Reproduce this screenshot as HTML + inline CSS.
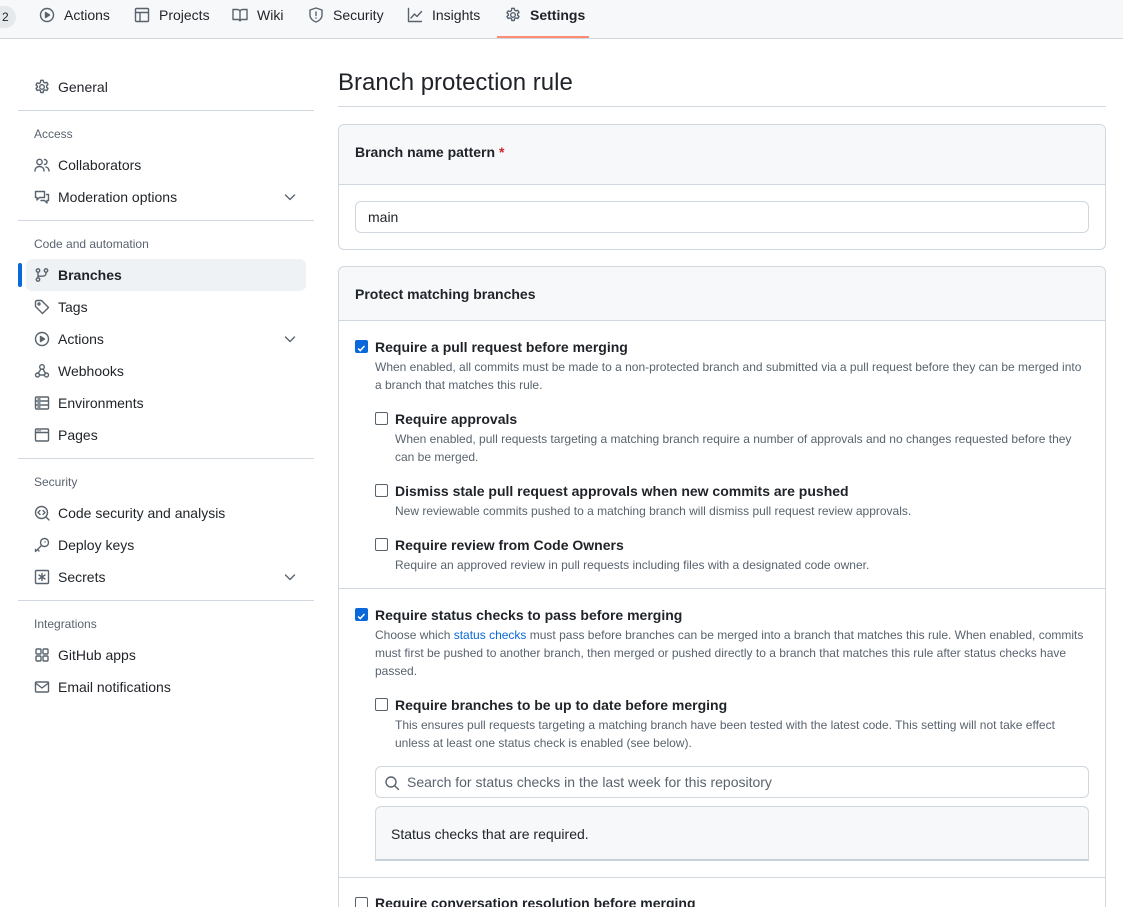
<!DOCTYPE html>
<html><head><meta charset="utf-8"><style>
*{margin:0;padding:0;box-sizing:border-box}
html,body{width:1123px;height:907px;overflow:hidden}
body{background:#fff;font-family:"Liberation Sans",sans-serif;color:#1f2328;position:relative;font-size:14px}
.a{position:absolute;white-space:nowrap;line-height:20px}
.nav{position:absolute;left:0;top:0;width:1123px;height:39px;background:#f6f8fa;border-bottom:1px solid #d0d7de}
.ic{position:absolute;width:16px;height:16px}
.ic svg{width:16px;height:16px;fill:none;stroke:#59636e;stroke-width:1.4;stroke-linecap:round;stroke-linejoin:round}
.hd{font-size:12px;color:#59636e;font-weight:normal}
.sep{position:absolute;left:18px;width:296px;height:1px;background:#d0d7de}
.d{font-size:12px;color:#59636e;line-height:18px;position:absolute;white-space:normal}
.cb{position:absolute;width:13px;height:13px;border:1px solid #59636e;border-radius:2px;background:#fff}
.cb.on{background:#0969da;border-color:#0969da}
.b{font-weight:600}
</style></head><body>
<div class="nav"></div>
<div class="a" style="left:0;top:6px;width:16px;height:22px;background:#e6e9ec;border-radius:0 11px 11px 0;font-size:12px;line-height:22px;padding-left:2px">2</div>
<span class="ic" style="left:39px;top:7px"><svg viewBox="0 0 16 16"><circle cx="8" cy="8" r="6.5"/><path d="M6.5 5.5v5l4-2.5z" fill="#59636e"/></svg></span>
<div class="a" style="left:64px;top:5px">Actions</div>
<span class="ic" style="left:134px;top:7px"><svg viewBox="0 0 16 16"><rect x="1.5" y="1.5" width="13" height="13" rx="1"/><path d="M1.5 5.5h13M6 5.5v9"/></svg></span>
<div class="a" style="left:159px;top:5px">Projects</div>
<span class="ic" style="left:232px;top:7px"><svg viewBox="0 0 16 16"><path d="M1 2.5h4.5c1.5 0 2.5 1 2.5 2.5v9c0-1-1-1.5-2-1.5H1zM15 2.5h-4.5C9 2.5 8 3.5 8 5v9c0-1 1-1.5 2-1.5h5z"/></svg></span>
<div class="a" style="left:257px;top:5px">Wiki</div>
<span class="ic" style="left:308px;top:7px"><svg viewBox="0 0 16 16"><path d="M8 1l6 2v5c0 3.5-3 6-6 7-3-1-6-3.5-6-7V3z"/><path d="M8 5v3.5M8 11v.2"/></svg></span>
<div class="a" style="left:333px;top:5px">Security</div>
<span class="ic" style="left:407px;top:7px"><svg viewBox="0 0 16 16"><path d="M1.5 1.5v13h13M4 11l3.5-4 2.5 2.5 4.5-5"/></svg></span>
<div class="a" style="left:432px;top:5px">Insights</div>
<span class="ic" style="left:505px;top:7px"><svg viewBox="0 0 16 16"><circle cx="8" cy="8" r="2.3"/><path d="M6.8 1.3h2.4l.4 1.8 1.4.8 1.8-.6 1.2 2-1.4 1.3v1.6l1.4 1.3-1.2 2-1.8-.6-1.4.8-.4 1.8H6.8l-.4-1.8-1.4-.8-1.8.6-1.2-2 1.4-1.3V7.2L2 5.9l1.2-2 1.8.6 1.4-.8z"/></svg></span>
<div class="a b" style="left:530px;top:5px">Settings</div>
<div style="position:absolute;left:497px;top:36px;width:92px;height:2px;background:#fd8c73"></div>

<span class="ic" style="left:34px;top:79px"><svg viewBox="0 0 16 16"><circle cx="8" cy="8" r="2.3"/><path d="M6.8 1.3h2.4l.4 1.8 1.4.8 1.8-.6 1.2 2-1.4 1.3v1.6l1.4 1.3-1.2 2-1.8-.6-1.4.8-.4 1.8H6.8l-.4-1.8-1.4-.8-1.8.6-1.2-2 1.4-1.3V7.2L2 5.9l1.2-2 1.8.6 1.4-.8z"/></svg></span>
<div class="a" style="left:58px;top:77px">General</div>
<div class="sep" style="top:110px"></div>
<div class="a hd" style="left:34px;top:124px">Access</div>
<span class="ic" style="left:34px;top:157px"><svg viewBox="0 0 16 16"><circle cx="5.5" cy="5" r="2.7"/><path d="M1 14c0-3 2-4.5 4.5-4.5S10 11 10 14M10.5 2.5a2.5 2.5 0 0 1 0 5M12 10c1.8.5 3 2 3 4"/></svg></span>
<div class="a" style="left:58px;top:155px">Collaborators</div>
<span class="ic" style="left:34px;top:189px"><svg viewBox="0 0 16 16"><path d="M1.5 2.5h9v6h-5l-2.5 2.5v-2.5h-1.5zM12.5 5.5h2v6h-1.5v2.5l-2.5-2.5h-3.5"/></svg></span>
<div class="a" style="left:58px;top:187px">Moderation options</div>
<span class="ic" style="left:282px;top:189px"><svg viewBox="0 0 16 16"><path d="M3.5 6l4.5 4.5L12.5 6"/></svg></span>
<div class="sep" style="top:220px"></div>
<div class="a hd" style="left:34px;top:234px">Code and automation</div>
<div style="position:absolute;left:26px;top:259px;width:280px;height:32px;background:#eff2f5;border-radius:6px"></div>
<div style="position:absolute;left:18px;top:263px;width:4px;height:24px;background:#0969da;border-radius:4px"></div>
<span class="ic" style="left:34px;top:267px"><svg viewBox="0 0 16 16"><circle cx="4" cy="3.5" r="1.7"/><circle cx="4" cy="12.5" r="1.7"/><circle cx="12" cy="3.5" r="1.7"/><path d="M4 5.2v5.6M12 5.2v1c0 2-1.5 3-3.5 3H4"/></svg></span>
<div class="a b" style="left:58px;top:265px">Branches</div>
<span class="ic" style="left:34px;top:299px"><svg viewBox="0 0 16 16"><path d="M1.5 2.5v5l7 7 6-6-7-7h-5z"/><circle cx="5" cy="5" r="1"/></svg></span>
<div class="a" style="left:58px;top:297px">Tags</div>
<span class="ic" style="left:34px;top:331px"><svg viewBox="0 0 16 16"><circle cx="8" cy="8" r="6.5"/><path d="M6.5 5.5v5l4-2.5z" fill="#59636e"/></svg></span>
<div class="a" style="left:58px;top:329px">Actions</div>
<span class="ic" style="left:282px;top:331px"><svg viewBox="0 0 16 16"><path d="M3.5 6l4.5 4.5L12.5 6"/></svg></span>
<span class="ic" style="left:34px;top:363px"><svg viewBox="0 0 16 16"><circle cx="8" cy="4" r="2.3"/><circle cx="3.5" cy="12" r="2"/><circle cx="12.5" cy="12" r="2"/><path d="M7 6l-3 4.5M9 6l2.5 4.5M5.5 12h5"/></svg></span>
<div class="a" style="left:58px;top:361px">Webhooks</div>
<span class="ic" style="left:34px;top:395px"><svg viewBox="0 0 16 16"><rect x="1.5" y="2" width="13" height="12" rx="1"/><path d="M1.5 6h13M1.5 10h13M4 4h2M4 8h2M4 12h2"/></svg></span>
<div class="a" style="left:58px;top:393px">Environments</div>
<span class="ic" style="left:34px;top:427px"><svg viewBox="0 0 16 16"><rect x="1.5" y="2" width="13" height="12" rx="1"/><path d="M1.5 5.5h13M4 3.8h.1M6 3.8h.1"/></svg></span>
<div class="a" style="left:58px;top:425px">Pages</div>
<div class="sep" style="top:458px"></div>
<div class="a hd" style="left:34px;top:472px">Security</div>
<span class="ic" style="left:34px;top:505px"><svg viewBox="0 0 16 16"><circle cx="7.5" cy="7.5" r="6"/><path d="M12 12l3 3M6 5.5l-2 2 2 2M9 5.5l2 2-2 2"/></svg></span>
<div class="a" style="left:58px;top:503px">Code security and analysis</div>
<span class="ic" style="left:34px;top:537px"><svg viewBox="0 0 16 16"><circle cx="10.5" cy="5.5" r="4"/><path d="M7.5 8.5L1.5 14.5v-2M3.5 12.5l1.5 1.5M11 5h.1"/></svg></span>
<div class="a" style="left:58px;top:535px">Deploy keys</div>
<span class="ic" style="left:34px;top:569px"><svg viewBox="0 0 16 16"><rect x="1.5" y="1.5" width="13" height="13" rx="1"/><path d="M8 4.5v7M5 6l6 4M11 6l-6 4"/></svg></span>
<div class="a" style="left:58px;top:567px">Secrets</div>
<span class="ic" style="left:282px;top:569px"><svg viewBox="0 0 16 16"><path d="M3.5 6l4.5 4.5L12.5 6"/></svg></span>
<div class="sep" style="top:600px"></div>
<div class="a hd" style="left:34px;top:614px">Integrations</div>
<span class="ic" style="left:34px;top:647px"><svg viewBox="0 0 16 16"><rect x="2" y="2" width="5" height="5" rx="1"/><rect x="9" y="2" width="5" height="5" rx="1"/><rect x="2" y="9" width="5" height="5" rx="1"/><rect x="9" y="9" width="5" height="5" rx="1"/></svg></span>
<div class="a" style="left:58px;top:645px">GitHub apps</div>
<span class="ic" style="left:34px;top:679px"><svg viewBox="0 0 16 16"><rect x="1.5" y="3" width="13" height="10" rx="1"/><path d="M1.5 4l6.5 5 6.5-5"/></svg></span>
<div class="a" style="left:58px;top:677px">Email notifications</div>

<div class="a" style="left:338px;top:68px;font-size:24px;line-height:30px">Branch protection rule</div>
<div style="position:absolute;left:338px;top:106px;width:768px;height:1px;background:#d0d7de"></div>

<div style="position:absolute;left:338px;top:124px;width:768px;height:126px;border:1px solid #d0d7de;border-radius:6px;overflow:hidden">
 <div style="height:60px;background:#f6f8fa;border-bottom:1px solid #d0d7de"></div>
</div>
<div class="a b" style="left:355px;top:142px">Branch name pattern <span style="color:#d1242f">*</span></div>
<div style="position:absolute;left:355px;top:201px;width:734px;height:32px;border:1px solid #d0d7de;border-radius:6px"></div>
<div class="a" style="left:368px;top:207px">main</div>

<div style="position:absolute;left:338px;top:266px;width:768px;height:660px;border:1px solid #d0d7de;border-radius:6px;overflow:hidden">
 <div style="height:54px;background:#f6f8fa;border-bottom:1px solid #d0d7de"></div>
</div>
<div class="a b" style="left:355px;top:284px">Protect matching branches</div>
<div style="position:absolute;left:339px;top:588px;width:766px;height:1px;background:#d0d7de"></div>
<div style="position:absolute;left:339px;top:877px;width:766px;height:1px;background:#d0d7de"></div>

<div class="cb on" style="left:355px;top:340px"><svg viewBox="0 0 13 13" width="11" height="11"><path d="M2.5 6.5l2.5 2.5 5-5.5" stroke="#fff" stroke-width="1.8" fill="none"/></svg></div>
<div class="a b" style="left:375px;top:337px">Require a pull request before merging</div>
<div class="d" style="left:375px;top:358px;width:712px">When enabled, all commits must be made to a non-protected branch and submitted via a pull request before they can be merged into a branch that matches this rule.</div>

<div class="cb" style="left:375px;top:412px"></div>
<div class="a b" style="left:395px;top:409px">Require approvals</div>
<div class="d" style="left:395px;top:430px;width:690px">When enabled, pull requests targeting a matching branch require a number of approvals and no changes requested before they can be merged.</div>

<div class="cb" style="left:375px;top:484px"></div>
<div class="a b" style="left:395px;top:481px">Dismiss stale pull request approvals when new commits are pushed</div>
<div class="d" style="left:395px;top:502px;width:690px">New reviewable commits pushed to a matching branch will dismiss pull request review approvals.</div>

<div class="cb" style="left:375px;top:538px"></div>
<div class="a b" style="left:395px;top:535px">Require review from Code Owners</div>
<div class="d" style="left:395px;top:556px;width:690px">Require an approved review in pull requests including files with a designated code owner.</div>

<div class="cb on" style="left:355px;top:608px"><svg viewBox="0 0 13 13" width="11" height="11"><path d="M2.5 6.5l2.5 2.5 5-5.5" stroke="#fff" stroke-width="1.8" fill="none"/></svg></div>
<div class="a b" style="left:375px;top:605px">Require status checks to pass before merging</div>
<div class="d" style="left:375px;top:626px;width:720px">Choose which <span style="color:#0969da">status checks</span> must pass before branches can be merged into a branch that matches this rule. When enabled, commits must first be pushed to another branch, then merged or pushed directly to a branch that matches this rule after status checks have passed.</div>

<div class="cb" style="left:375px;top:698px"></div>
<div class="a b" style="left:395px;top:695px">Require branches to be up to date before merging</div>
<div class="d" style="left:395px;top:716px;width:690px">This ensures pull requests targeting a matching branch have been tested with the latest code. This setting will not take effect unless at least one status check is enabled (see below).</div>

<div style="position:absolute;left:375px;top:766px;width:714px;height:32px;border:1px solid #d0d7de;border-radius:6px"></div>
<span class="ic" style="left:384px;top:775px"><svg viewBox="0 0 16 16"><circle cx="7" cy="7" r="5"/><path d="M10.5 10.5l4 4"/></svg></span>
<div class="a" style="left:407px;top:772px;color:#59636e">Search for status checks in the last week for this repository</div>
<div style="position:absolute;left:375px;top:806px;width:714px;height:55px;border:1px solid #d0d7de;border-bottom:2px solid #c8d0d8;border-radius:6px 6px 0 0;background:#f6f8fa"></div>
<div class="a" style="left:391px;top:824px">Status checks that are required.</div>

<div class="cb" style="left:355px;top:897px"></div>
<div class="a b" style="left:375px;top:893px">Require conversation resolution before merging</div>
</body></html>
